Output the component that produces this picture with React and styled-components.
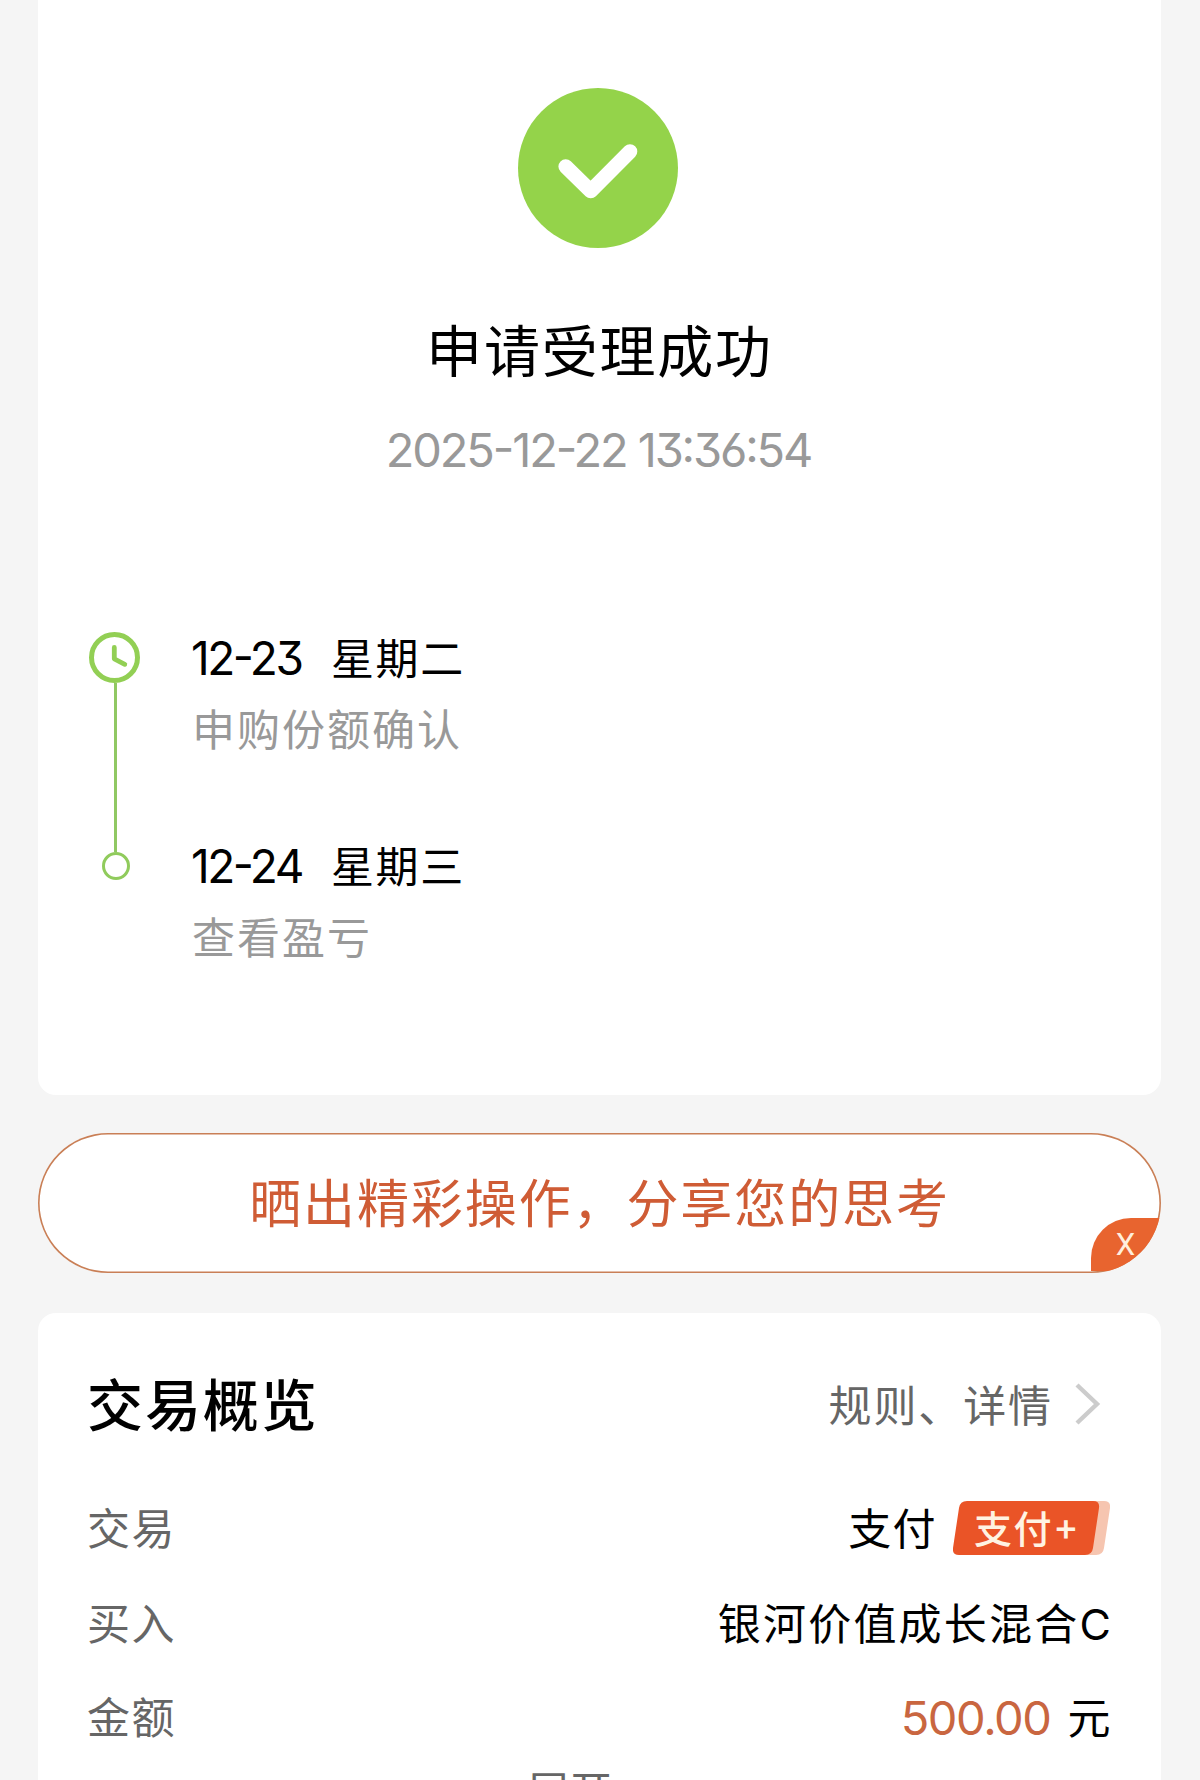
import styled, { createGlobalStyle } from 'styled-components'

const GlobalStyle = createGlobalStyle`
    * {
        box-sizing: border-box;
    }
    body {
        margin: 0;
        background-color: #f5f5f5;
        font-family: Inter, "Noto Sans CJK SC", sans-serif;
        font-feature-settings: "cv03", "cv09", "case";
        color: #000;
    }
`

const Container = styled.div`
    height: 1780px;
    padding: 0 39px 0 38px;
    overflow: hidden;
    display: flex;
    flex-direction: column;
`

//Result card
const ResultCard = styled.section`
    height: 1095px;
    flex-shrink: 0;
    padding: 88px 49px 0;
    background-color: #fff;
    border-radius: 0 0 18px 18px;
    display: flex;
    flex-direction: column;
    align-items: center;
`
const SuccessIcon = styled.svg`
    width: 160px;
    height: 160px;
    margin-right: 3px;
    flex-shrink: 0;
`
const Title = styled.h1`
    margin: 69px 0 0;
    font-size: 56px;
    font-weight: 400;
    line-height: 70px;
    letter-spacing: 1.8px;
`
const Time = styled.p`
    margin: 33px 0 0;
    padding-right: 2px;
    font-size: 47px;
    line-height: 60px;
    letter-spacing: -2.15px;
    color: #999;
`

//Timeline
const Timeline = styled.div`
    width: 100%;
    margin-top: 152px;
    display: flex;
`
const Rail = styled.div`
    width: 56px;
    margin-right: 48px;
    display: flex;
    flex-direction: column;
    align-items: center;
`
const ClockIcon = styled.svg`
    width: 51px;
    height: 51px;
    margin-right: 1px;
`
const Line = styled.div`
    width: 3px;
    height: 169px;
    background-color: #90c863;
`
const Dot = styled.div`
    width: 28px;
    height: 28px;
    margin-left: 2px;
    border: 3px solid #90cb5c;
    border-radius: 50%;
`
const Step = styled.div`
    height: 208px;
`
const Day = styled.div`
    display: flex;
    line-height: 52px;
`
const DayDate = styled.span`
    width: 140px;
    font-size: 46px;
    letter-spacing: -2.5px;
`
const Week = styled.span`
    padding-top: 1px;
    font-size: 43px;
    letter-spacing: 1.6px;
`
const StepDesc = styled.p`
    margin: 19px 0 0 1px;
    font-size: 43px;
    line-height: 52px;
    letter-spacing: 2px;
    color: #999;
`

//Share banner
const Share = styled.div`
    position: relative;
    height: 140px;
    flex-shrink: 0;
    margin: 38px 0 40px;
    border-radius: 70px;
    background-color: #fff;
    box-shadow: inset 0 0 0 1.6px #c97f56;
    overflow: hidden;
    display: flex;
    align-items: center;
    justify-content: center;
`
const ShareText = styled.span`
    padding-top: 3px;
    font-size: 52px;
    line-height: 70px;
    letter-spacing: 1.9px;
    color: #cf5c35;
`
const CloseTag = styled.button`
    position: absolute;
    right: 0;
    bottom: 2px;
    width: 70px;
    height: 53px;
    padding: 0 1px 0 0;
    border: none;
    border-radius: 40px 0 0 0;
    background-color: #e8642f;
    color: #ffeedd;
    font-family: Roboto, sans-serif;
    font-size: 31px;
    font-weight: 400;
    line-height: 53px;
`

//Overview card
const Overview = styled.section`
    height: 520px;
    flex-shrink: 0;
    padding: 58px 49px 0;
    background-color: #fff;
    border-radius: 18px 18px 0 0;
    display: flex;
    flex-direction: column;
`
const Header = styled.div`
    height: 70px;
    display: flex;
    align-items: center;
    justify-content: space-between;
    margin-bottom: 41px;
`
const Heading = styled.h2`
    margin: 0;
    font-size: 56px;
    font-weight: 500;
    line-height: 70px;
    letter-spacing: 1.9px;
`
const Rules = styled.div`
    display: flex;
    align-items: center;
    margin-right: 11px;
    font-size: 43px;
    line-height: 60px;
    letter-spacing: 1.9px;
    color: #666;
`
const Chevron = styled.svg`
    width: 27px;
    height: 44px;
    margin: 0 0 4px 21px;
`
const Row = styled.div`
    height: 94.5px;
    flex-shrink: 0;
    display: flex;
    align-items: center;
    justify-content: space-between;
    font-size: 43px;
    line-height: 60px;
    letter-spacing: 1.4px;
`
const Label = styled.span`
    color: #666;
`
const Value = styled.span`
    display: flex;
    align-items: center;
    margin-right: ${props => props.$inset || 0}px;
    letter-spacing: ${props => props.$spacing || 1.4}px;
`
const Amount = styled.span`
    margin-right: 17px;
    font-size: 47px;
    letter-spacing: -1.4px;
    color: #c96640;
`
const PayTag = styled.span`
    position: relative;
    width: 157px;
    height: 54px;
    margin: 0 0 3px 16px;
    padding-left: 21px;
    font-size: 38px;
    font-weight: 500;
    line-height: 57px;
    letter-spacing: 1.6px;
    color: #fff3e2;
`
const PayShape = styled.svg`
    position: absolute;
    left: 0;
    top: 0;
    width: 157px;
    height: 54px;
`
const PayText = styled.span`
    position: relative;
`
const More = styled.div`
    height: 60px;
    margin-top: -4px;
    flex-shrink: 0;
    font-size: 43px;
    line-height: 60px;
    text-align: center;
    padding-right: 60px;
    color: #666;
`

const steps = [
    { date: "12-23", week: "星期二", desc: "申购份额确认" },
    { date: "12-24", week: "星期三", desc: "查看盈亏" },
]

const App = () => {
  return (
    <>
        <GlobalStyle />
        <Container lang="zh-CN">
            <ResultCard>
                <SuccessIcon viewBox="0 0 160 160" fill="none">
                    <circle cx="80" cy="80" r="80" fill="#94d34a" />
                    <path d="M47.7 78.5 72.7 103 112 63.5" stroke="#fff" strokeWidth="14.6" strokeLinecap="round" strokeLinejoin="round" />
                </SuccessIcon>
                <Title>申请受理成功</Title>
                <Time>2025-12-22 13:36:54</Time>
                <Timeline>
                    <Rail>
                        <ClockIcon viewBox="0 0 51 51" fill="none" stroke="#92cf54" strokeLinecap="round" strokeLinejoin="round">
                            <circle cx="25.5" cy="25.5" r="23" strokeWidth="5" />
                            <path d="M25.3 15.5v11.3l10.5 5.5" strokeWidth="4.8" />
                        </ClockIcon>
                        <Line />
                        <Dot />
                    </Rail>
                    <div>
                        {steps.map(step => (
                            <Step key={step.date}>
                                <Day>
                                    <DayDate>{step.date}</DayDate>
                                    <Week>{step.week}</Week>
                                </Day>
                                <StepDesc>{step.desc}</StepDesc>
                            </Step>
                        ))}
                    </div>
                </Timeline>
            </ResultCard>

            <Share>
                <ShareText>晒出精彩操作，分享您的思考</ShareText>
                <CloseTag>X</CloseTag>
            </Share>

            <Overview>
                <Header>
                    <Heading>交易概览</Heading>
                    <Rules>
                        规则、详情
                        <Chevron viewBox="0 0 27 44" fill="none">
                            <path d="M3 3 23 22 3 41" stroke="#ccc" strokeWidth="4.4" />
                        </Chevron>
                    </Rules>
                </Header>
                <Row>
                    <Label>交易</Label>
                    <Value $inset={2}>
                        支付
                        <PayTag>
                            <PayShape viewBox="0 0 157 54">
                                <path d="M20 0h131q7 0 6 7l-6 40q-1 7-8 7H20z" fill="#f6c5b0" />
                                <path d="M14 0h126q7 0 6 7l-6 40q-1 7-8 7H6q-7 0-6-7L6 7q1-7 8-7z" fill="#ea5427" />
                            </PayShape>
                            <PayText>支付+</PayText>
                        </PayTag>
                    </Value>
                </Row>
                <Row>
                    <Label>买入</Label>
                    <Value $inset={-1} $spacing={2.2}>银河价值成长混合C</Value>
                </Row>
                <Row>
                    <Label>金额</Label>
                    <Value>
                        <Amount>500.00</Amount>
                        元
                    </Value>
                </Row>
                <More>展开</More>
            </Overview>
        </Container>
    </>
  )
}

export default App
